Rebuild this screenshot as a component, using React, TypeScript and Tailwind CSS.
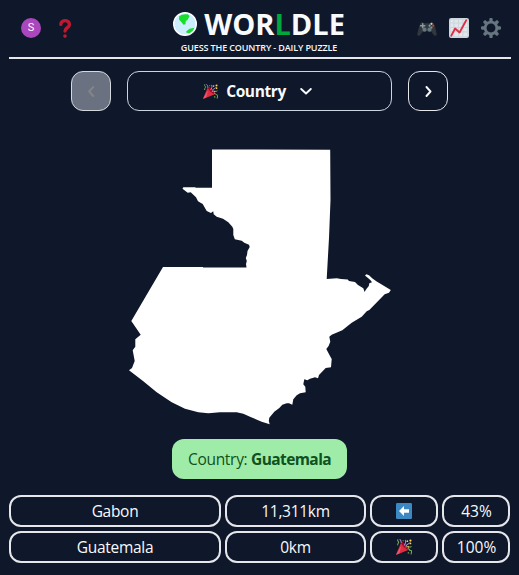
import React from "react";

const COUNTRY_SHAPE =
  "M212 149.5L330.2 149.7L330.5 200L329 238L326.7 279L336.7 278.3L341 279L347.7 279.5L349 281L355 282L358 285L363.3 288.3L364.6 292L366 289.6L368.8 286L369.3 283.3L372 282.3L370.3 280L365 275.5L366.4 274.2L369 275.2L372.5 278.5L376.7 281.5L390.8 290L389 292.7L384.7 294.3L369.3 310L366.7 311.3L361.7 316.7L351.7 322.7L342.3 330.3L331.7 334.7L329.3 336.7L330.3 341.7L328.6 346L326.3 349L330 356L331.7 359L331 367.3L325.7 368L319 375L318 378.3L315 377.3L310 378.7L307.3 380.3L304.3 379.3L303.3 384.3L305.3 386.7L305.7 392.3L300 393.3L296.7 395.3L293.3 399.3L292.3 404.7L289 403.2L286.7 403.3L282.3 404.7L279.3 408L274.3 411.7L269.3 417.7L268.8 421L269.7 424.3L261.7 421.7L250 416.7L243.3 413.7L236.7 412.3L220 412.3L208.3 413.3L198.3 412.3L185 408.7L171.7 402.3L156.7 392.3L143.3 381.3L129 370.3L132 368L134.7 361L132.7 350.3L135.3 346.7L135.3 339.3L140.7 334.7L131.3 321L163 267L203 267L203 267.4L246.5 267.4L246 264L246.8 261L245.8 258L247 255L247.5 251L249.7 247L249 244.7L244.3 242.7L241.7 240.7L234.8 239.3L233.3 235L233.3 229L232.3 226.7L228.3 222.3L223 218.7L216.7 216.7L213.7 214.3L213.2 211.3L211 213L206.7 211L202.7 204L198 201.3L196 197.3L190.7 192.3L187.7 192.7L182.5 188.7L183.3 187.3L195 187.3L196 187.8L212 187.8Z";

function Party({ className }: { className: string }) {
  return (
    <svg viewBox="0 0 36 36" className={className}>
      <path fill="#DD2E44" d="M11.6 7.6L.4 34.1c-.5 1.2.3 1.8 1.4 1.4l26.6-11.2c1.6-1.7-1-6.7-5.6-11.2S13.200 6.100 11.600 7.600z" />
      <path fill="#EA596E" d="M13 12.500L.7 34.200c-.2.700.200 1.100.700.800l6.200-2.900z" />
      <path fill="#A0041E" d="M11.700 7.500c1.500-1.700 6.500 1 11.100 5.600s7.100 9.700 5.500 11.200c-1.600 1.400-6.500-1-11.200-5.600C12.500 14 10.200 9 11.700 7.500z" />
      <path fill="#DD2E44" d="M12 10c2 5 9 12 14 14l-5 2L9 16z" />
      <g fill="none" strokeWidth="2.300" strokeLinecap="round">
        <path stroke="#AA8DD8" d="M18.500 14c2.500-2.500 4-7 2.500-11M9 1.500c2 2 3 4 2.500 6.500" />
        <path stroke="#77B255" d="M4 1.500c-2 3 2 3 2 6s-3 2-2 6M22 18c5-3 8 2 12-1M27 22c5-1 2 5 6 4s1 6 1 8" />
        <path stroke="#AA8DD8" d="M23 15c3-6 5-2 7-6" />
      </g>
      <g fill="#FFCC4D">
        <circle cx="25.500" cy="5" r="2" /><circle cx="32.500" cy="3.500" r="2.500" /><circle cx="32.500" cy="10" r="2" /><circle cx="28" cy="18" r="1.500" />
      </g>
      <circle cx="28" cy="31" r="2" fill="#5C913B" />
      <circle cx="16" cy="4" r="1.500" fill="#5C913B" />
    </svg>
  );
}

function Globe() {
  return (
    <svg viewBox="0 0 24 24" className="size-6">
      <circle cx="12" cy="12" r="11.300" fill="#cceeff" stroke="#fff" strokeWidth="1.400" />
      <path fill="#19dc2b" d="M6.200 4.200Q9 1.700 14.700 2.300L16.600 4L14.800 7.500L12.700 9.200L12.500 12.300L10.500 12.700L8.300 10L6 7.500zM13.200 19.500L16.500 16.800L21.500 15.700Q20 19.500 16.400 21.300L13.500 20.700z" />
    </svg>
  );
}

function Gamepad() {
  return (
    <svg viewBox="0 0 36 36" className="size-5">
      <path fill="#31373D" d="M3 18l3-8c1-1.800 2.500-2.300 4.500-2.100 1.800.3 2 1.500 3.500 1.500h8c1.500 0 1.700-1.200 3.500-1.500 2-.2 3.500.3 4.500 2.100l3 8 2.500 11c.4 3.500-3.500 4-5.500 1.500l-5-6.500H11l-5 6.500c-2 2.500-5.900 2-5.500-1.500z" />
      <path fill="#8899A6" d="M9 9.500h2.600v3H15v2.700h-3.400v3.300H9v-3.300H5.500v-2.700H9z" />
      <circle cx="13.500" cy="21" r="3.700" fill="#66757F" /><circle cx="22.500" cy="21" r="3.700" fill="#66757F" />
      <circle cx="26" cy="10.500" r="1.900" fill="#FFCC4D" /><circle cx="29.300" cy="13.800" r="1.900" fill="#DD2E44" /><circle cx="26" cy="17.200" r="1.900" fill="#77B255" /><circle cx="22.700" cy="13.800" r="1.900" fill="#55ACEE" />
    </svg>
  );
}

function Chart() {
  return (
    <svg viewBox="0 0 36 36" className="size-5">
      <rect width="36" height="36" rx="4" fill="#CCD6DD" />
      <path fill="#E1E8ED" d="M3 3h5v5H3zm7 0h6v5h-6zm8 0h6v5h-6zm8 0h7v5h-7zM3 10h5v6H3zm7 0h6v6h-6zm8 0h6v6h-6zm8 0h7v6h-7zM3 18h5v6H3zm7 0h6v6h-6zm8 0h6v6h-6zm8 0h7v6h-7zM3 26h5v7H3zm7 0h6v7h-6zm8 0h6v7h-6zm8 0h7v7h-7z" />
      <path d="M4 32l7-13 8 7L31 4" fill="none" stroke="#DD2E44" strokeWidth="3.300" strokeLinecap="round" strokeLinejoin="round" />
    </svg>
  );
}

function Gear() {
  return (
    <svg viewBox="0 0 36 36" className="size-5">
      <path fill="#66757F" d="M34 15h-3.362c-.324-1.369-.864-2.651-1.582-3.814l2.379-2.379c.781-.781.781-2.048 0-2.829l-1.414-1.414c-.781-.781-2.047-.781-2.828 0l-2.379 2.379C23.65 6.225 22.369 5.686 21 5.362V2c0-1.104-.896-2-2-2h-2c-1.104 0-2 .896-2 2v3.362c-1.369.324-2.651.864-3.814 1.582L8.808 4.565c-.781-.781-2.048-.781-2.828 0L4.565 5.979c-.781.781-.781 2.048-.001 2.829l2.379 2.379C6.225 12.35 5.686 13.632 5.362 15H2c-1.104 0-2 .896-2 2v2c0 1.104.896 2 2 2h3.362c.324 1.368.864 2.65 1.582 3.813l-2.379 2.379c-.78.78-.78 2.048.001 2.829l1.414 1.414c.78.78 2.047.78 2.828 0l2.379-2.379c1.163.719 2.445 1.258 3.814 1.582V34c0 1.104.896 2 2 2h2c1.104 0 2-.896 2-2v-3.362c1.368-.324 2.65-.864 3.813-1.582l2.379 2.379c.781.781 2.047.781 2.828 0l1.414-1.414c.781-.781.781-2.048 0-2.829l-2.379-2.379c.719-1.163 1.258-2.445 1.582-3.814H34c1.104 0 2-.896 2-2v-2C36 15.896 35.104 15 34 15zM18 26c-4.418 0-8-3.582-8-8s3.582-8 8-8 8 3.582 8 8-3.582 8-8 8z" />
    </svg>
  );
}

function Question() {
  return (
    <svg viewBox="0 0 36 36" className="size-5">
      <path d="M10.500 11.500c0-9 15.500-9 15.500 0 0 7-8 5-8 12" fill="none" stroke="#BE1931" strokeWidth="6" strokeLinecap="round" />
      <circle cx="18" cy="32.500" r="3.300" fill="#BE1931" />
    </svg>
  );
}

function LeftArrow() {
  return (
    <svg viewBox="0 0 16 16" className="size-4">
      <rect width="16" height="16" rx="1.200" fill="#3B88C3" />
      <path fill="#fff" d="M3 8l5-5v3.200h5v3.600H8V13z" />
    </svg>
  );
}

function Chevron({ d, className }: { d: string; className: string }) {
  return (
    <svg viewBox="0 0 12 12" className={className} fill="none" stroke="currentColor" strokeWidth="1.900" strokeLinecap="round" strokeLinejoin="round">
      <path d={d} />
    </svg>
  );
}

const CELL = "flex h-8 items-center justify-center rounded-xl border-2 border-[#e5e7eb]";

function GuessRow({ name, distance, icon, percent }: { name: string; distance: string; icon: React.ReactNode; percent: string }) {
  return (
    <div className="grid grid-cols-[212px_141px_68px_68px] gap-1 text-[15.5px]">
      <div className={`${CELL} pt-[2px] tracking-[-0.3px]`}>{name}</div>
      <div className={`${CELL} pt-[2px] tracking-[-0.3px]`}>{distance}</div>
      <div className={CELL}>{icon}</div>
      <div className={`${CELL} pt-[2px] pl-px`}>{percent}</div>
    </div>
  );
}

export default function App() {
  return (
    <div className="flex h-[575px] w-[519px] flex-col overflow-hidden bg-[#0f172a] pl-[9px] font-['Open_Sans','Noto_Sans',sans-serif] text-slate-50">
      <header className="flex h-[59px] w-[502px] justify-between border-b-2 border-[#e5e7eb] pl-3 pr-[10px]">
        <div className="flex w-[100px] items-center gap-[14px] pb-px">
          <div className="flex size-5 items-center justify-center rounded-full bg-[#ab47bc] pt-px font-[Roboto,sans-serif] text-[11px]">S</div>
          <Question />
        </div>
        <div className="flex flex-col items-center pt-1 pr-1">
          <h1 className="flex h-10 items-center gap-[7px] text-[29px] font-bold leading-10">
            <Globe />
            <span>WOR<span className="text-green-600">L</span>DLE</span>
          </h1>
          <p className="translate-y-[-3px] whitespace-nowrap text-[9px] font-semibold leading-[13px] tracking-[-0.12px]">GUESS THE COUNTRY - DAILY PUZZLE</p>
        </div>
        <div className="flex w-[100px] items-center justify-end gap-3 pb-px">
          <Gamepad />
          <Chart />
          <Gear />
        </div>
      </header>
      <nav className="mt-3 flex w-[501px] justify-center gap-4">
        <button className="flex size-10 items-center justify-center rounded-xl border border-[#d5d8dd] bg-gray-500 text-[#858585]">
          <Chevron d="M8.200 2L4.200 6.500L8.200 11" className="size-3" />
        </button>
        <button className="flex h-10 w-[265px] items-center justify-center rounded-xl border border-[#cbd5e1] pr-1 text-[15.5px] font-bold tracking-[-0.4px]">
          <Party className="mr-2 size-[15px]" />
          <span className="pt-[2px]">Country</span>
          <Chevron d="M1.200 4L6 8.500L10.800 4" className="ml-[14px] size-3" />
        </button>
        <button className="flex size-10 items-center justify-center rounded-xl border border-[#e5e7eb]">
          <Chevron d="M4.500 2L8.500 6.500L4.500 11" className="size-3" />
        </button>
      </nav>
      <svg viewBox="120 111 280 328" className="ml-[111px] h-[328px] w-[280px] shrink-0">
        <path d={COUNTRY_SHAPE} fill="#fff" />
      </svg>
      <div className="ml-[163px] flex h-10 w-[175px] items-center justify-center rounded-xl bg-[#9feca9] pt-[2px] text-[15.5px] tracking-[-0.3px] text-[#0f5120]">
        <p>Country: <b className="font-bold tracking-[-0.6px]">Guatemala</b></p>
      </div>
      <main className="mt-4 flex flex-col gap-1">
        <GuessRow name="Gabon" distance="11,311km" icon={<LeftArrow />} percent="43%" />
        <GuessRow name="Guatemala" distance="0km" icon={<Party className="size-4" />} percent="100%" />
      </main>
    </div>
  );
}
